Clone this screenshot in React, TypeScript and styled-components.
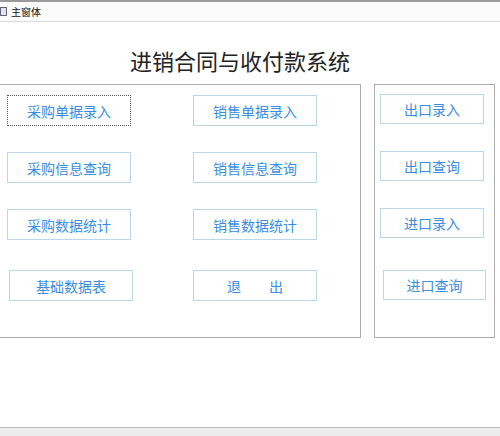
import React from "react";
import styled, { createGlobalStyle } from "styled-components";

const G = createGlobalStyle`
  html,body{margin:0;padding:0;background:#fff;width:500px;height:436px;overflow:hidden;
  font-family:"Noto Sans CJK SC","Liberation Sans",sans-serif;}
`;
const Win = styled.div`width:500px;height:436px;display:flex;flex-direction:column;background:#fff;`;
const TitleBar = styled.div`border-top:2px solid #9a9a9a;border-bottom:1px solid #d8d8d8;background:#fbfbfb;
  display:flex;align-items:center;gap:4px;font-size:10px;color:#111;box-sizing:border-box;height:22px;`;
const Icon = styled.div`width:7px;height:9px;border:1px solid #667;background:#dde4f0;box-sizing:border-box;`;
const Heading = styled.div`text-align:center;font-size:22px;color:#222;margin-top:23px;height:30px;line-height:30px;padding-right:20px;`;
const Body = styled.div`display:flex;margin-top:9px;gap:13px;`;
const Panel = styled.div<{w:number}>`width:${p=>p.w}px;height:254px;border:1px solid #adadad;border-left:${p=>p.w>200?"none":"1px solid #adadad"};box-sizing:border-box;position:relative;`;
const Btn = styled.div<{x:number;y:number;w:number;h:number;dotted?:boolean}>`
  position:absolute;left:${p=>p.x}px;top:${p=>p.y}px;width:${p=>p.w}px;height:${p=>p.h}px;box-sizing:border-box;
  border:1px ${p=>p.dotted?"dotted #555":"solid #b9d6ea"};background:#fff;color:#3a8de0;font-size:14px;
  display:flex;align-items:center;justify-content:center;`;
const Bottom = styled.div`margin-top:auto;height:8px;border-top:1px solid #bbb;background:#ececec;`;

export default function App(){
  const L:[string,number,number,boolean?][]=[
    ["采购单据录入",7,10,true],["采购信息查询",7,67],["采购数据统计",7,124],["基础数据表",9,185],
    ["销售单据录入",193,10],["销售信息查询",193,67],["销售数据统计",193,124],["退\u3000\u3000出",193,185]];
  const R:[string,number,number,number][]=[["出口录入",5,9,104],["出口查询",5,66,104],["进口录入",5,123,104],["进口查询",8,185,103]];
  return <Win><G/>
    <TitleBar><Icon/>主窗体</TitleBar>
    <Heading>进销合同与收付款系统</Heading>
    <Body>
      <Panel w={361}>{L.map(([t,x,y,d])=><Btn key={t} x={x} y={y} w={124} h={31} dotted={d}>{t}</Btn>)}</Panel>
      <Panel w={121}>{R.map(([t,x,y,w])=><Btn key={t} x={x} y={y} w={w} h={30}>{t}</Btn>)}</Panel>
    </Body>
    <Bottom/>
  </Win>;
}
